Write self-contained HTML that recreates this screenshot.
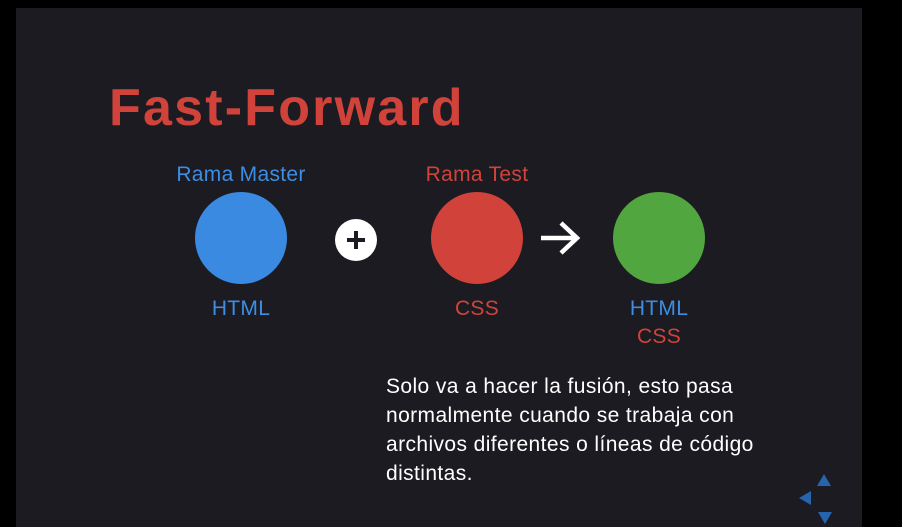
<!DOCTYPE html>
<html><head><style>
body{margin:0;width:902px;height:527px;background:#000;overflow:hidden;font-family:"Liberation Sans",sans-serif;}
.s{position:absolute;left:16px;top:8px;width:846px;height:519px;background:#1c1b22;}
.t{position:absolute;left:109px;top:78px;font-size:52px;font-weight:bold;color:#d1433a;letter-spacing:2.2px;}
.c{position:absolute;width:92px;height:92px;border-radius:50%;}
.l{position:absolute;font-size:21px;text-align:center;width:200px;letter-spacing:0.3px;}
.b{color:#3d8ee2}.r{color:#d1433a}
.p{position:absolute;left:386px;top:372px;color:#fff;font-size:21px;line-height:29px;width:400px;letter-spacing:0.4px;}
</style></head><body>
<div class="s"></div>
<div class="t">Fast-Forward</div>
<div class="l b" style="left:141px;top:163px">Rama Master</div>
<div class="l r" style="left:377px;top:163px">Rama Test</div>
<div class="c" style="left:195px;top:192px;background:#3b8ae2"></div>
<div class="c" style="left:431px;top:192px;background:#d1433a"></div>
<div class="c" style="left:613px;top:192px;background:#52a63f"></div>
<svg style="position:absolute;left:335px;top:219px" width="42" height="42"><circle cx="21" cy="21" r="21" fill="#fff"/><path d="M21 12v18M12 21h18" stroke="#1c1b22" stroke-width="4"/></svg>
<svg style="position:absolute;left:538px;top:220px" width="44" height="36"><path d="M3 18h36M23 3l16 15-16 15" stroke="#fff" stroke-width="4.5" fill="none"/></svg>
<div class="l b" style="left:141px;top:297px">HTML</div>
<div class="l r" style="left:377px;top:297px">CSS</div>
<div class="l b" style="left:559px;top:297px">HTML</div>
<div class="l r" style="left:559px;top:325px">CSS</div>
<div class="p">Solo va a hacer la fusión, esto pasa normalmente cuando se trabaja con archivos diferentes o líneas de código distintas.</div>
<svg style="position:absolute;left:796px;top:472px" width="40" height="52"><path d="M28 2l7 12h-14z M29 52l7-12h-14z M3 26l12-7v14z" fill="#2565b0"/></svg>
</body></html>
